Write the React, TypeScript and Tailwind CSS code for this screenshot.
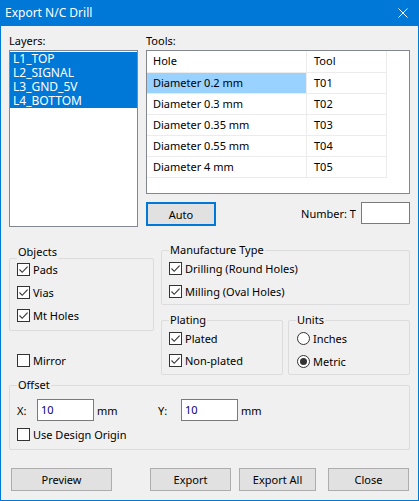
import React from 'react'

const font = "font-['Noto_Sans','Segoe_UI',sans-serif]"

const layers = ['L1_TOP', 'L2_SIGNAL', 'L3_GND_5V', 'L4_BOTTOM']

const tools = [
  { hole: 'Diameter 0.2 mm', tool: 'T01', selected: true },
  { hole: 'Diameter 0.3 mm', tool: 'T02' },
  { hole: 'Diameter 0.35 mm', tool: 'T03' },
  { hole: 'Diameter 0.55 mm', tool: 'T04' },
  { hole: 'Diameter 4 mm', tool: 'T05' },
]

function Check({ label, checked = false }: { label: string; checked?: boolean }) {
  return (
    <div className="flex items-center gap-[3px] h-[13px]">
      <span className="w-[13px] h-[13px] shrink-0 border border-[#333333] bg-white flex items-center justify-center">
        {checked && (
          <svg width="11" height="11" viewBox="0 0 11 11">
            <path d="M1.5 5.5 L4.2 8.3 L9.6 2.6" stroke="#333333" strokeWidth="1.1" fill="none" />
          </svg>
        )}
      </span>
      <span className="leading-[14px] whitespace-nowrap">{label}</span>
    </div>
  )
}

function Radio({ label, checked = false }: { label: string; checked?: boolean }) {
  return (
    <div className="flex items-center gap-[3px] h-[13px]">
      <span className="w-[13px] h-[13px] shrink-0 rounded-full border border-[#333333] bg-white flex items-center justify-center">
        {checked && <span className="w-[7px] h-[7px] rounded-full bg-[#333333]" />}
      </span>
      <span className="leading-[14px] whitespace-nowrap">{label}</span>
    </div>
  )
}

function Group({
  title,
  className = '',
  titleTop = '-top-[8px]',
  children,
}: {
  title: string
  className?: string
  titleTop?: string
  children?: React.ReactNode
}) {
  return (
    <div className={`relative border border-[#dcdcdc] rounded-[2px] ${className}`}>
      <span className={`absolute ${titleTop} left-[7px] bg-[#f0f0f0] px-[1px] leading-[14px]`}>{title}</span>
      {children}
    </div>
  )
}

function Button({ label, className = '' }: { label: string; className?: string }) {
  return (
    <div className={`h-[23px] bg-[#e1e1e1] border border-[#adadad] flex items-center justify-center leading-none ${className}`}>
      {label}
    </div>
  )
}

export default function App() {
  return (
    <div className={`w-[419px] h-[501px] flex flex-col bg-[#f0f0f0] text-[11px] text-black ${font}`}>
      {/* Title bar */}
      <div className="h-[26px] shrink-0 bg-[#0078d7] flex items-center justify-between pl-[5px] pr-[11px] text-white">
        <span className="text-[12px] leading-none">Export N/C Drill</span>
        <svg width="10" height="10" viewBox="0 0 10 10">
          <path d="M0.5 0.5 L9.5 9.5 M9.5 0.5 L0.5 9.5" stroke="white" strokeWidth="1" />
        </svg>
      </div>

      <div className="flex-1 border-x border-b border-[#0078d7] px-[8px] pt-[8px] flex flex-col">
        {/* Layers + Tools */}
        <div className="flex gap-[8px]">
          <div className="w-[129px] flex flex-col">
            <div className="h-[16px] leading-[14px]">Layers:</div>
            <div className="h-[177px] border border-[#828790] bg-white pt-[1px] text-[12px]">
              {layers.map((l) => (
                <div key={l} className="h-[14px] leading-[14px] bg-[#0078d7] text-white pl-[3px]">
                  {l}
                </div>
              ))}
            </div>
          </div>

          <div className="w-[264px] flex flex-col">
            <div className="h-[16px] leading-[14px]">Tools:</div>
            <div className="h-[144px] border border-[#828790] bg-white">
              <div className="w-[240px] border-r border-[#ececec]">
                <div className="h-[22px] flex border-b border-[#ececec]">
                  <div className="w-[160px] border-r border-[#ececec] pl-[6px] flex items-center">Hole</div>
                  <div className="flex-1 pl-[7px] flex items-center">Tool</div>
                </div>
                {tools.map((t) => (
                  <div key={t.tool} className="h-[21px] flex border-b border-[#ececec]">
                    <div
                      className={`w-[160px] border-r border-[#ececec] pl-[6px] flex items-center ${
                        t.selected ? 'bg-[#99d1ff]' : ''
                      }`}
                    >
                      {t.hole}
                    </div>
                    <div className="flex-1 pl-[7px] flex items-center">{t.tool}</div>
                  </div>
                ))}
              </div>
            </div>
            <div className="mt-[8px] h-[24px] flex items-start">
              <div className="w-[70px] h-[24px] bg-[#e1e1e1] border-2 border-[#0078d7] flex items-center justify-center leading-none">
                Auto
              </div>
              <div className="ml-auto flex items-center gap-[5px]">
                <span className="leading-none">Number: T</span>
                <div className="w-[49px] h-[22px] bg-white border border-[#7a7a7a]" />
              </div>
            </div>
          </div>
        </div>

        {/* Options */}
        <div className="flex gap-[7px]">
          <div className="w-[145px] flex flex-col">
            <Group title="Objects" titleTop="-top-[14px]" className="mt-[31px] h-[73px] pl-[7px] pt-[4px]">
              <div className="flex flex-col gap-[10px]">
                <Check label="Pads" checked />
                <Check label="Vias" checked />
                <Check label="Mt Holes" checked />
              </div>
            </Group>
            <div className="mt-[23px] pl-[8px]">
              <Check label="Mirror" />
            </div>
          </div>

          <div className="w-[249px] flex flex-col">
            <Group title="Manufacture Type" className="mt-[23px] h-[55px] pl-[7px] pt-[11px]">
              <div className="flex flex-col gap-[10px]">
                <Check label="Drilling (Round Holes)" checked />
                <Check label="Milling (Oval Holes)" checked />
              </div>
            </Group>
            <div className="mt-[15px] flex gap-[5px]">
              <Group title="Plating" className="w-[122px] h-[55px] pl-[7px] pt-[11px]">
                <div className="flex flex-col gap-[9px]">
                  <Check label="Plated" checked />
                  <Check label="Non-plated" checked />
                </div>
              </Group>
              <Group title="Units" className="w-[122px] h-[55px] pl-[8px] pt-[11px]">
                <div className="flex flex-col gap-[10px]">
                  <Radio label="Inches" />
                  <Radio label="Metric" checked />
                </div>
              </Group>
            </div>
          </div>
        </div>

        {/* Offset */}
        <Group title="Offset" className="mt-[10px] h-[65px] pl-[7px] pt-[13px]">
          <div className="flex items-center h-[22px]">
            <span className="w-[20px] leading-none">X:</span>
            <div className="w-[57px] h-[22px] bg-white border border-[#7a7a7a] pl-[3px] flex items-center text-[#000080]">10</div>
            <span className="w-[64px] pl-[3px] leading-none">mm</span>
            <span className="w-[23px] leading-none">Y:</span>
            <div className="w-[57px] h-[22px] bg-white border border-[#7a7a7a] pl-[3px] flex items-center text-[#000080]">10</div>
            <span className="pl-[3px] leading-none">mm</span>
          </div>
          <div className="mt-[7px]">
            <Check label="Use Design Origin" />
          </div>
        </Group>

        {/* Buttons */}
        <div className="mt-[18px] flex">
          <Button label="Preview" className="ml-[2px] w-[101px]" />
          <Button label="Export" className="ml-[38px] w-[81px]" />
          <Button label="Export All" className="ml-[8px] w-[77px]" />
          <Button label="Close" className="ml-[12px] w-[81px]" />
        </div>
      </div>
    </div>
  )
}
